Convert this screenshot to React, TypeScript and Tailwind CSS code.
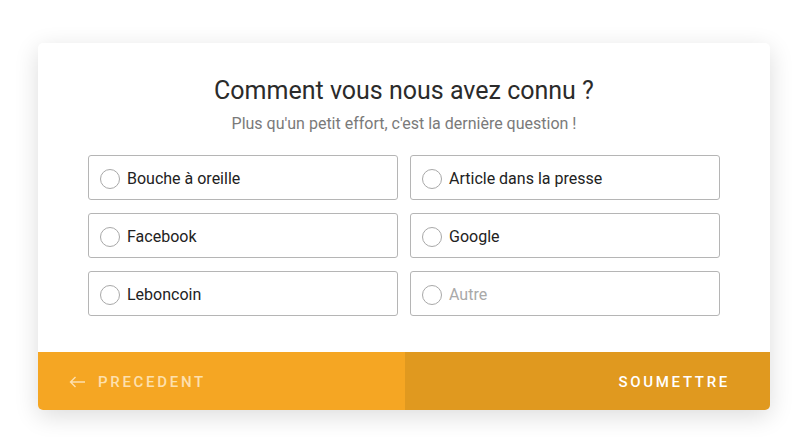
const options = [
  { label: "Bouche à oreille" },
  { label: "Article dans la presse" },
  { label: "Facebook" },
  { label: "Google" },
  { label: "Leboncoin" },
  { label: "Autre", placeholder: true },
];

export default function App() {
  return (
    <div
      className="w-[796px] h-[437px] bg-white pt-[43px] px-[38px]"
      style={{ fontFamily: "Roboto, 'Liberation Sans', sans-serif" }}
    >
      <div className="w-[732px] h-[367px] bg-white rounded-[5px] shadow-[0_6px_24px_rgba(0,0,0,0.14)] flex flex-col overflow-hidden">
        <div className="flex-1 flex flex-col items-center pt-[33px] px-[50px]">
          <h1 className="text-[25px] leading-[30px] text-[#2b2b2b]">Comment vous nous avez connu ?</h1>
          <p className="mt-[8px] text-[16px] leading-[20px] text-[#7a7a7a]">
            Plus qu'un petit effort, c'est la dernière question !
          </p>
          <div className="mt-[21px] w-full grid grid-cols-2 gap-x-[12px] gap-y-[13px]">
            {options.map((o) => (
              <label
                key={o.label}
                className="h-[45px] flex items-center gap-[7px] pl-[11px] pt-[2px] border border-[#b5b5b5] rounded-[3px] bg-white"
              >
                <span className="w-[20px] h-[20px] rounded-full border border-[#a8a8a8] bg-white shrink-0" />
                <span
                  className={
                    o.placeholder
                      ? "text-[16px] text-[#a9a9a9]"
                      : "text-[16px] text-[#222]"
                  }
                >
                  {o.label}
                </span>
              </label>
            ))}
          </div>
        </div>
        <div className="h-[58px] flex">
          <button className="w-[367px] h-full bg-[#f5a623] flex items-center pl-[31px] pt-[2px] gap-[12px] text-[#fde0ae]">
            <svg width="17" height="12" viewBox="0 0 17 12" fill="none" stroke="currentColor" strokeWidth="1.4">
              <path d="M16 6H1.5M6.5 1 1.5 6l5 5" />
            </svg>
            <span className="text-[15px] font-medium tracking-[2.7px]">PRECEDENT</span>
          </button>
          <button className="flex-1 h-full bg-[#e0991f] flex items-center justify-end pr-[40px] pt-[2px] text-white">
            <span className="text-[15px] font-medium tracking-[2.7px]">SOUMETTRE</span>
          </button>
        </div>
      </div>
    </div>
  );
}
